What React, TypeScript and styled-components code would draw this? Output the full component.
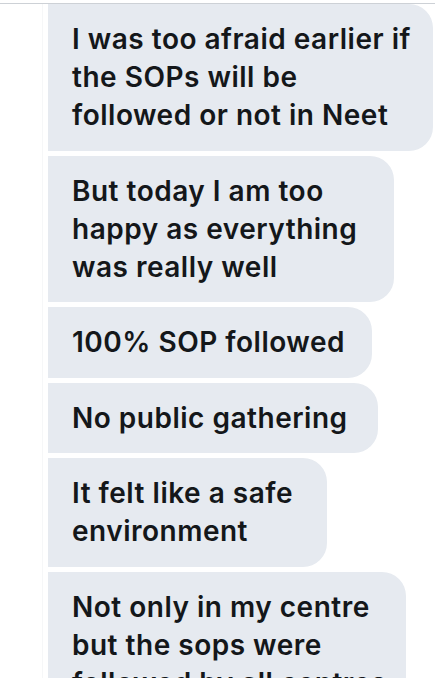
import React from "react";
import styled, { createGlobalStyle } from "styled-components";

const Global = createGlobalStyle`
  html, body { margin: 0; padding: 0; background: #ffffff; }
  body { width: 435px; height: 678px; overflow: hidden; }
  #root { width: 435px; height: 678px; }
`;

const Screen = styled.div`
  width: 435px;
  height: 678px;
  overflow: hidden;
  background: #ffffff;
  display: flex;
  flex-direction: column;
`;

const TopRule = styled.div`
  height: 3px;
  flex: none;
  border-bottom: 1px solid #cdd1d6;
`;

const Gutter = styled.div`
  display: flex;
  flex-direction: column;
  align-items: flex-start;
  gap: 5px;
  margin-left: 42px;
  padding-left: 5px;
  border-left: 1px solid #f6f7f8;
`;

const Bubble = styled.div<{ $w: number }>`
  box-sizing: border-box;
  width: ${(p) => p.$w}px;
  padding: 16px 0 16.5px 24px;
  background: #e6eaf0;
  border-radius: 0 24px 24px 0;
  color: #14171a;
  font-family: Inter, "Noto Sans", "Liberation Sans", sans-serif;
  font-weight: 600;
  font-size: 28px;
  line-height: 38px;
  letter-spacing: 0.5px;
  white-space: nowrap;
`;

const Line = styled.div``;

const messages: { w: number; lines: string[] }[] = [
  { w: 385, lines: ["I was too afraid earlier if", "the SOPs will be", "followed or not in Neet"] },
  { w: 346, lines: ["But today I am too", "happy as everything", "was really well"] },
  { w: 324, lines: ["100% SOP followed"] },
  { w: 330, lines: ["No public gathering"] },
  { w: 279, lines: ["It felt like a safe", "environment"] },
  { w: 358, lines: ["Not only in my centre", "but the sops were", "followed by all centres"] },
];

export default function App() {
  return (
    <Screen>
      <Global />
      <TopRule />
      <Gutter>
        {messages.map((m, i) => (
          <Bubble key={i} $w={m.w}>
            {m.lines.map((l, j) => (
              <Line key={j}>{l}</Line>
            ))}
          </Bubble>
        ))}
      </Gutter>
    </Screen>
  );
}
